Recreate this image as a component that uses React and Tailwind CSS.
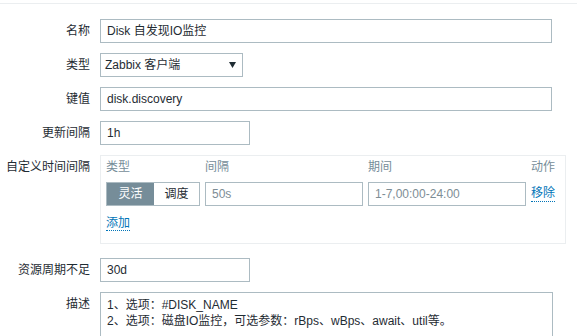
const font = { fontFamily: '"Liberation Sans", "Noto Sans CJK SC", sans-serif' };

function Label({ children }) {
  return (
    <div className="w-[90px] shrink-0 text-right leading-[24px] text-[#1f2c33]">{children}</div>
  );
}

function TextBox({ value, width, placeholder }) {
  return (
    <div
      className={`h-6 border border-[#acbbc2] bg-white pl-[6px] leading-[22px] whitespace-nowrap ${placeholder ? 'text-[#7d8d95]' : 'text-[#1f2c33]'}`}
      style={{ width }}
    >
      {value}
    </div>
  );
}

function Row({ label, children, className = '' }) {
  return (
    <div className={`flex items-start gap-[10px] ${className}`}>
      <Label>{label}</Label>
      {children}
    </div>
  );
}

export default function App() {
  return (
    <div className="w-[577px] h-[336px] overflow-hidden bg-white text-[12px]" style={font}>
      <div className="pt-[3px]">
        <div className="border-t border-[#ebeef0] pt-[15px] flex flex-col gap-[10px]">
          <Row label="名称">
            <TextBox value="Disk 自发现IO监控" width={452} />
          </Row>

          <Row label="类型">
            <div className="w-[143px] h-6 border border-[#acbbc2] bg-white pl-1 pr-[6px] flex items-center justify-between text-[#1f2c33]">
              <span>Zabbix 客户端</span>
              <svg width="7" height="6" viewBox="0 0 7 6">
                <polygon points="0,0 7,0 3.5,6" fill="#1f2c33" />
              </svg>
            </div>
          </Row>

          <Row label="键值">
            <TextBox value="disk.discovery" width={452} />
          </Row>

          <Row label="更新间隔">
            <TextBox value="1h" width={150} />
          </Row>

          <Row label="自定义时间间隔">
            <div className="w-[466px] h-[89px] border border-[#ebeef0] pt-[1px] px-[5px]">
              <div className="grid grid-cols-[94px_158px_158px_auto] gap-x-[5px] text-[#768d99] leading-[20px]">
                <span>类型</span>
                <span>间隔</span>
                <span>期间</span>
                <span>动作</span>
              </div>
              <div className="mt-[5px] grid grid-cols-[94px_158px_158px_auto] gap-x-[5px] items-center">
                <div className="flex h-6 border border-[#acbbc2] leading-[22px]">
                  <span className="w-[47px] bg-[#768d99] text-white text-center">灵活</span>
                  <span className="flex-1 bg-white text-[#1f2c33] text-center">调度</span>
                </div>
                <TextBox value="50s" width={158} placeholder />
                <TextBox value="1-7,00:00-24:00" width={158} placeholder />
                <span className="text-[#0275b8] leading-[15px] border-b border-dotted border-[#0275b8] justify-self-start">移除</span>
              </div>
              <div className="mt-[8px]">
                <span className="text-[#0275b8] leading-[15px] border-b border-dotted border-[#0275b8]">添加</span>
              </div>
            </div>
          </Row>

          <Row label="资源周期不足" className="mt-[4px]">
            <TextBox value="30d" width={150} />
          </Row>

          <Row label="描述">
            <div className="w-[453px] h-[80px] border border-[#acbbc2] bg-white pt-[4px] px-[6px] leading-4 text-[#1f2c33]">
              <div>1、选项：#DISK_NAME</div>
              <div>2、选项：磁盘IO监控，可选参数：rBps、wBps、await、util等。</div>
            </div>
          </Row>
        </div>
      </div>
    </div>
  );
}
